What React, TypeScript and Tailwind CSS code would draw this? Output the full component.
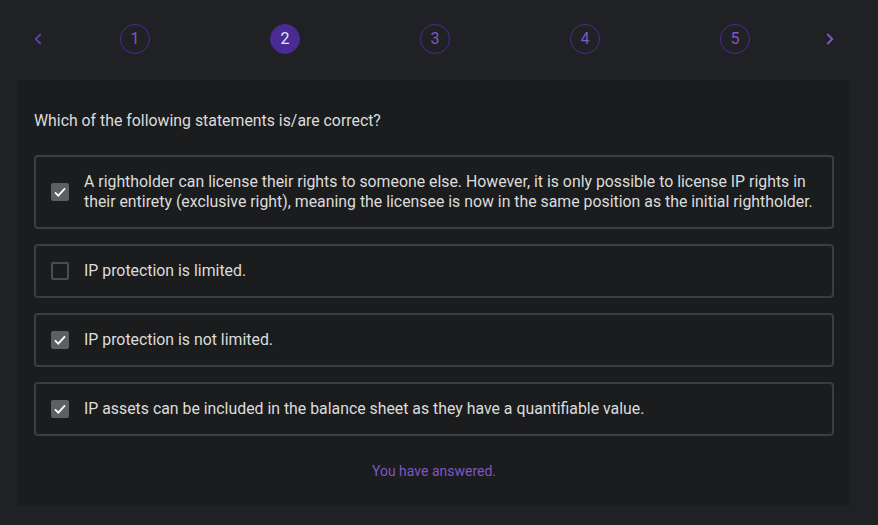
import { ChevronLeft, ChevronRight } from 'lucide-react';

const steps = [1, 2, 3, 4, 5];

const options = [
  {
    text: 'A rightholder can license their rights to someone else. However, it is only possible to license IP rights in their entirety (exclusive right), meaning the licensee is now in the same position as the initial rightholder.',
    checked: true,
  },
  { text: 'IP protection is limited.', checked: false },
  { text: 'IP protection is not limited.', checked: true },
  { text: 'IP assets can be included in the balance sheet as they have a quantifiable value.', checked: true },
];

function Checkbox({ checked }: { checked: boolean }) {
  if (!checked) {
    return <div className="h-[18px] w-[18px] shrink-0 rounded-[2px] border-2 border-[#4a4c50]" />;
  }
  return (
    <div className="flex h-[18px] w-[18px] shrink-0 items-center justify-center rounded-[2px] bg-[#5c5f64]">
      <svg width="14" height="14" viewBox="0 0 14 14" fill="none">
        <path d="M2 7.4 5.3 10.6 12 3.4" stroke="#ffffff" strokeWidth="1.8" />
      </svg>
    </div>
  );
}

export default function App() {
  return (
    <div
      className="min-h-[525px] w-full bg-[#202124] pb-5 pl-[18px] pr-[28px] text-[#dcdcdc]"
      style={{ fontFamily: 'Roboto, "Noto Sans", sans-serif' }}
    >
      <div className="flex h-20 items-center pb-[2px]">
        <button className="ml-2 flex h-6 w-6 items-center justify-center text-[#5b3ea8]">
          <ChevronLeft size={18} strokeWidth={2.5} />
        </button>
        <div className="ml-[70px] flex gap-[120px]">
          {steps.map((n) => (
            <div
              key={n}
              className={
                n === 2
                  ? 'flex h-[30px] w-[30px] items-center justify-center rounded-full border border-[#4a2a93] bg-[#4a2a93] text-base text-[#e8e0f8]'
                  : 'flex h-[30px] w-[30px] items-center justify-center rounded-full border border-[#4a2a93] text-base text-[#7e57c2]'
              }
            >
              {n}
            </div>
          ))}
        </div>
        <button className="ml-[68px] flex h-6 w-6 items-center justify-center text-[#7e57c2]">
          <ChevronRight size={18} strokeWidth={2.5} />
        </button>
      </div>

      <div className="rounded-[3px] bg-[#1b1c1e] px-4 pb-[25px] pt-[31px]">
        <p className="text-[15.85px] leading-5 text-[#dcdcdc]">Which of the following statements is/are correct?</p>
        <div className="mt-6 flex flex-col gap-[15px]">
          {options.map((o) => (
            <div
              key={o.text}
              className="flex items-center gap-[15px] rounded-[4px] border-2 border-[#3c3d40] px-[15px] py-[15px]"
            >
              <Checkbox checked={o.checked} />
              <span className="text-[15.85px] leading-5 text-[#dcdcdc]">{o.text}</span>
            </div>
          ))}
        </div>
        <p className="mt-[25px] text-center text-sm leading-5 text-[#7e57c2]">You have answered.</p>
      </div>
    </div>
  );
}
